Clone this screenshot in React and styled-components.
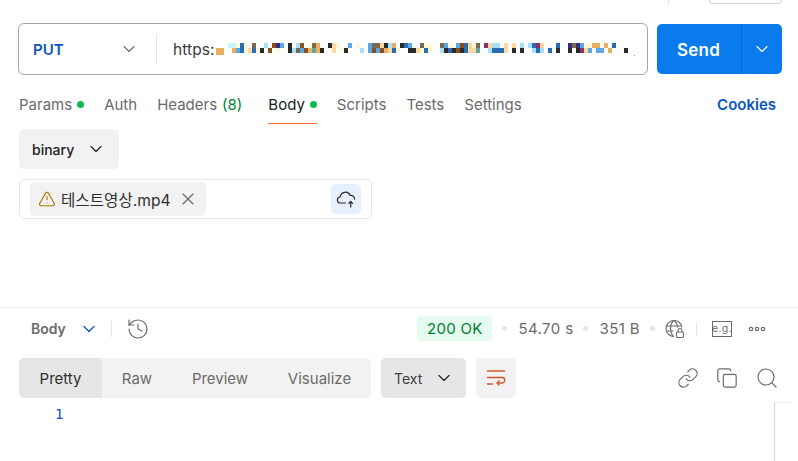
import React from 'react';
import styled, { createGlobalStyle } from 'styled-components';
import { ChevronDown, TriangleAlert, X, History, Link, Copy, Search } from 'lucide-react';

const GlobalStyle = createGlobalStyle`
  html, body { margin: 0; padding: 0; background: #fff; }
  body { font-family: Inter, "Noto Sans CJK KR", sans-serif; }
`;

const Page = styled.div`
  width: 798px;
  height: 461px;
  overflow: hidden;
  position: relative;
  display: flex;
  flex-direction: column;
  color: #212121;
`;

const TopStrip = styled.div`
  height: 4px;
  display: flex;
  justify-content: flex-end;
  padding-right: 16px;
  gap: 40px;
`;

const TopDivider = styled.div`
  width: 1px;
  height: 4px;
  background: #e0e0e0;
`;

const TopButton = styled.div`
  width: 71px;
  height: 3px;
  border: 1px solid #d6d6d6;
  border-top: none;
  border-radius: 0 0 5px 5px;
`;

const RequestRow = styled.div`
  display: flex;
  gap: 9px;
  padding: 19px 16px 0 18px;
`;

const UrlBox = styled.div`
  width: 630px;
  height: 52px;
  box-sizing: border-box;
  border: 1px solid #a6a6a6;
  border-radius: 6px;
  display: flex;
  align-items: center;
`;

const Method = styled.div`
  width: 138px;
  height: 30px;
  box-sizing: border-box;
  padding: 0 14px 0 14px;
  display: flex;
  align-items: center;
  justify-content: space-between;
  border-right: 1px solid #e6e6e6;
  color: #0b55c2;
  font-size: 15px;
  font-weight: 600;
  svg { color: #6b6b6b; margin-right: 3px; }
`;

const Url = styled.div`
  display: flex;
  align-items: center;
  margin-left: 16px;
  font-size: 15.5px;
  letter-spacing: 0.1px;
  color: #3a3a3a;
  svg { display: block; margin-left: 1px; }
`;

const SendButton = styled.div`
  width: 125px;
  height: 50px;
  margin-top: 1px;
  border-radius: 5px;
  background: #097bed;
  color: #fff;
  display: flex;
  align-items: stretch;
`;

const SendLabel = styled.div`
  width: 85px;
  display: flex;
  align-items: center;
  justify-content: center;
  font-size: 17px;
  letter-spacing: 0.2px;
  font-weight: 600;
  border-right: 1px solid #0668d0;
  padding: 1px 1px 0 0;
  box-sizing: border-box;
`;

const SendCaret = styled.div`
  flex: 1;
  display: flex;
  align-items: center;
  justify-content: center;
`;

const TabBar = styled.div`
  height: 50px;
  box-sizing: border-box;
  padding: 10px 22px 0 19px;
  display: flex;
  align-items: flex-start;
  gap: 20px;
  font-size: 15px;
`;

const Tab = styled.div`
  height: 39px;
  box-sizing: border-box;
  display: flex;
  align-items: center;
  gap: 5px;
  white-space: nowrap;
  color: ${p => (p.$active ? '#212121' : '#6b6b6b')};
  border-bottom: 1px solid ${p => (p.$active ? '#f26b3a' : 'transparent')};
  margin-right: ${p => p.$extra || 0}px;
`;

const Dot = styled.span`
  width: 7px;
  height: 7px;
  border-radius: 50%;
  background: #0cbb52;
`;

const Count = styled.span`
  color: #007f31;
`;

const Cookies = styled.div`
  margin-left: auto;
  height: 38px;
  display: flex;
  align-items: center;
  color: #0b55c2;
  font-weight: 600;
`;

const BodyPane = styled.div`
  height: 183px;
  padding: 0 19px;
  display: flex;
  flex-direction: column;
  align-items: flex-start;
  border-bottom: 1px solid #ededed;
  box-sizing: border-box;
`;

const ModeSelect = styled.div`
  width: 100px;
  height: 40px;
  margin-top: 4px;
  box-sizing: border-box;
  padding: 0 13px 0 13px;
  border-radius: 5px;
  background: #f2f2f2;
  display: flex;
  align-items: center;
  justify-content: space-between;
  font-size: 14px;
  font-weight: 500;
`;

const FileBox = styled.div`
  width: 353px;
  height: 40px;
  margin-top: 10px;
  box-sizing: border-box;
  border: 1px solid #e6e6e6;
  border-radius: 5px;
  padding: 0 10px;
  display: flex;
  align-items: center;
  justify-content: space-between;
`;

const FileChip = styled.div`
  width: 176px;
  height: 34px;
  box-sizing: border-box;
  background: #f2f2f2;
  border-radius: 5px;
  padding: 0 8px 0 8px;
  display: flex;
  align-items: center;
  font-size: 15.6px;
  color: #303030;
  white-space: nowrap;
  > svg:first-child { color: #a87400; margin-right: 5px; }
  > svg:last-child { color: #6b6b6b; margin-left: auto; }
`;

const CloudButton = styled.div`
  width: 30px;
  height: 30px;
  border-radius: 5px;
  background: #e7f0ff;
  display: flex;
  align-items: center;
  justify-content: center;
`;

const StatusBar = styled.div`
  height: 41px;
  padding: 0 32px 0 31px;
  display: flex;
  align-items: center;
  font-size: 15px;
  letter-spacing: 0.4px;
  color: #6b6b6b;
`;

const ResponseLabel = styled.div`
  font-size: 14px;
  letter-spacing: 0;
  font-weight: 600;
  color: #6b6b6b;
`;

const ResponseCaret = styled(ChevronDown)`
  color: #0b55c2;
  margin-left: 13px;
`;

const VDivider = styled.div`
  width: 1px;
  height: ${p => p.$h}px;
  background: #e6e6e6;
  margin: 0 ${p => p.$r}px 0 ${p => p.$l}px;
`;

const StatusBadge = styled.div`
  height: 25px;
  width: 75px;
  margin-left: auto;
  border-radius: 4px;
  background: #e6fbef;
  color: #007f31;
  letter-spacing: 0.3px;
  font-weight: 400;
  display: flex;
  align-items: center;
  justify-content: center;
`;

const Sep = styled.span`
  width: 5px;
  height: 5px;
  border-radius: 50%;
  background: #e6e6e6;
  margin: 0 ${p => p.$r}px 0 10px;
`;

const MoreSlot = styled.div`
  margin-left: 16px;
  display: flex;
`;

const Toolbar = styled.div`
  height: 40px;
  margin-top: 9px;
  padding: 0 19px;
  display: flex;
  align-items: center;
`;

const ViewTabs = styled.div`
  width: 352px;
  height: 40px;
  display: flex;
  background: #f2f2f2;
  border-radius: 5px;
  overflow: hidden;
  font-size: 15px;
  color: #6b6b6b;
`;

const ViewTab = styled.div`
  width: ${p => p.$w}px;
  display: flex;
  align-items: center;
  justify-content: center;
  background: ${p => (p.$active ? '#e6e6e6' : 'transparent')};
  color: ${p => (p.$active ? '#303030' : '#6b6b6b')};
`;

const FormatSelect = styled.div`
  width: 85px;
  height: 40px;
  margin-left: 10px;
  box-sizing: border-box;
  padding: 0 12px 0 13px;
  border-radius: 5px;
  background: #e6e6e6;
  display: flex;
  align-items: center;
  justify-content: space-between;
  font-size: 14px;
  color: #404040;
  svg { color: #212121; }
`;

const WrapButton = styled.div`
  width: 40px;
  height: 40px;
  margin-left: 10px;
  border-radius: 5px;
  background: #f2f2f2;
  display: flex;
  align-items: center;
  justify-content: center;
`;

const ToolIcons = styled.div`
  margin-left: auto;
  display: flex;
  align-items: center;
  gap: 17px;
  color: #6b6b6b;
`;

const Editor = styled.div`
  flex: 1;
  padding: 8px 0 0 55px;
  font-family: "DejaVu Sans Mono", monospace;
  font-size: 14px;
  line-height: 16px;
  color: #0b55c2;
`;

const Scrollbar = styled.div`
  position: absolute;
  right: 6px;
  bottom: 0;
  width: 17px;
  height: 58px;
  border-left: 1px solid #d9d9d9;
  border-top: 1px solid #ededed;
`;

const palette = {
  c: '#c8f4fb', b: '#2a6cb0', B: '#5aa8e6', o: '#e8b060', y: '#fff8d8', k: '#2a2a2a',
  n: '#8a5020', g: '#7a6a50', p: '#3a2a80', m: '#8a3070', s: '#fcd8a0', t: '#60a8a0', L: '#a8e0fc',
};
const rowTop = 'ccybywgwwLwnpBwkwLnwygowwksywwBwywwBggskLowkbBwwgyywwgBywBnbsygwmsLLwswswLwLbmswwwbwwpgpByyoowowbww';
const rowBottom = 'woBbysbykwnwywwkLgBnotokwwswykwwwLwBnBnosbywwkksybywwLkbknkbsstwwLbbbswkwkwwLbLwbwkwwkwkmsBwBBwowwwk';

const Mosaic = () => (
  <svg width="420" height="15" viewBox="216 39 420 15" shapeRendering="crispEdges">
    <rect x="216" y="45" width="8" height="7" fill="#e8b060" />
    {[rowTop, rowBottom].map((row, r) =>
      row.split('').map((ch, i) =>
        palette[ch] ? (
          <rect key={`${r}-${i}`} x={228 + i * 4} y={40 + r * 5} width="4" height="5" fill={palette[ch]} />
        ) : null
      )
    )}
    <rect x="634" y="52" width="1" height="1" fill="#999" />
  </svg>
);

const CloudUpload = () => (
  <svg width="20" height="20" viewBox="0 0 20 20" fill="none" stroke="#2b2b2b" strokeWidth="1.2" strokeLinecap="round" strokeLinejoin="round">
    <path d="M9.5 14H4.6a3 3 0 0 1-.4-6A5.2 5.2 0 0 1 14.2 6.5a3.4 3.4 0 0 1 4.3 3.6" />
    <path d="M14.7 18v-5.5M12.8 14.4l1.9-1.9 1.9 1.9" />
  </svg>
);

const WrapIcon = () => (
  <svg width="20" height="18" viewBox="0 0 20 18" fill="none" stroke="#d4552b" strokeWidth="1.3">
    <path d="M1 2h18M1 8.5h15a2.6 2.6 0 0 1 0 5.5H11M1 15h6" />
    <path d="M13.5 11.5 11 14l2.5 2.5" />
  </svg>
);

const GlobeLock = () => (
  <svg width="20" height="20" viewBox="0 0 20 20" fill="none" stroke="#6b6b6b" strokeWidth="1.1">
    <path d="M9 17.5a8 8 0 1 1 8-9" />
    <path d="M1.2 7h15M1.2 12h7M8.5 1.5C4.5 6 4.5 13 8.5 17.5M9 1.5c2.6 2.2 3.6 5 3.6 7" />
    <rect x="11.5" y="13" width="7" height="5.5" rx="1" />
    <path d="M13 13v-1.5a2 2 0 0 1 4 0V13" />
  </svg>
);

const ExampleIcon = () => (
  <svg width="20" height="16" viewBox="0 0 20 16">
    <rect x="0.5" y="0.5" width="19" height="15" fill="none" stroke="#6b6b6b" />
    <text x="10" y="11" textAnchor="middle" fontFamily="Inter, sans-serif" fontSize="10.5" fill="#6b6b6b">e.g.</text>
  </svg>
);

const MoreIcon = () => (
  <svg width="18" height="6" viewBox="0 0 18 6" fill="none" stroke="#6b6b6b" strokeWidth="1.2">
    <circle cx="3" cy="3" r="1.7" />
    <circle cx="9" cy="3" r="1.7" />
    <circle cx="15" cy="3" r="1.7" />
  </svg>
);

export default function App() {
  return (
    <Page>
      <GlobalStyle />
      <TopStrip>
        <TopDivider />
        <TopButton />
      </TopStrip>
      <RequestRow>
        <UrlBox>
          <Method>
            PUT
            <ChevronDown size={20} strokeWidth={1.3} />
          </Method>
          <Url>
            https:
            <Mosaic />
          </Url>
        </UrlBox>
        <SendButton>
          <SendLabel>Send</SendLabel>
          <SendCaret>
            <ChevronDown size={20} strokeWidth={1.3} />
          </SendCaret>
        </SendButton>
      </RequestRow>
      <TabBar>
        <Tab>Params<Dot /></Tab>
        <Tab>Auth</Tab>
        <Tab $extra={6}>Headers <Count>(8)</Count></Tab>
        <Tab $active>Body<Dot /></Tab>
        <Tab>Scripts</Tab>
        <Tab>Tests</Tab>
        <Tab>Settings</Tab>
        <Cookies>Cookies</Cookies>
      </TabBar>
      <BodyPane>
        <ModeSelect>
          binary
          <ChevronDown size={20} strokeWidth={1.4} />
        </ModeSelect>
        <FileBox>
          <FileChip>
            <TriangleAlert size={18} strokeWidth={1.5} />
            테스트영상.mp4
            <X size={20} strokeWidth={1.4} />
          </FileChip>
          <CloudButton>
            <CloudUpload />
          </CloudButton>
        </FileBox>
      </BodyPane>
      <StatusBar>
        <ResponseLabel>Body</ResponseLabel>
        <ResponseCaret size={20} strokeWidth={1.5} />
        <VDivider $h={16} $l={12} $r={14} />
        <History size={24} strokeWidth={1.2} />
        <StatusBadge>200 OK</StatusBadge>
        <Sep $r={11} />
        54.70 s
        <Sep $r={11} />
        351 B
        <Sep $r={10} />
        <GlobeLock />
        <VDivider $h={14} $l={11} $r={15} />
        <ExampleIcon />
        <MoreSlot>
          <MoreIcon />
        </MoreSlot>
      </StatusBar>
      <Toolbar>
        <ViewTabs>
          <ViewTab $w={83} $active>Pretty</ViewTab>
          <ViewTab $w={70}>Raw</ViewTab>
          <ViewTab $w={96}>Preview</ViewTab>
          <ViewTab $w={103}>Visualize</ViewTab>
        </ViewTabs>
        <FormatSelect>
          Text
          <ChevronDown size={20} strokeWidth={1.4} />
        </FormatSelect>
        <WrapButton>
          <WrapIcon />
        </WrapButton>
        <ToolIcons>
          <Link size={22} strokeWidth={1.3} />
          <Copy size={22} strokeWidth={1.3} />
          <Search size={24} strokeWidth={1.2} />
        </ToolIcons>
      </Toolbar>
      <Editor>1</Editor>
      <Scrollbar />
    </Page>
  );
}
